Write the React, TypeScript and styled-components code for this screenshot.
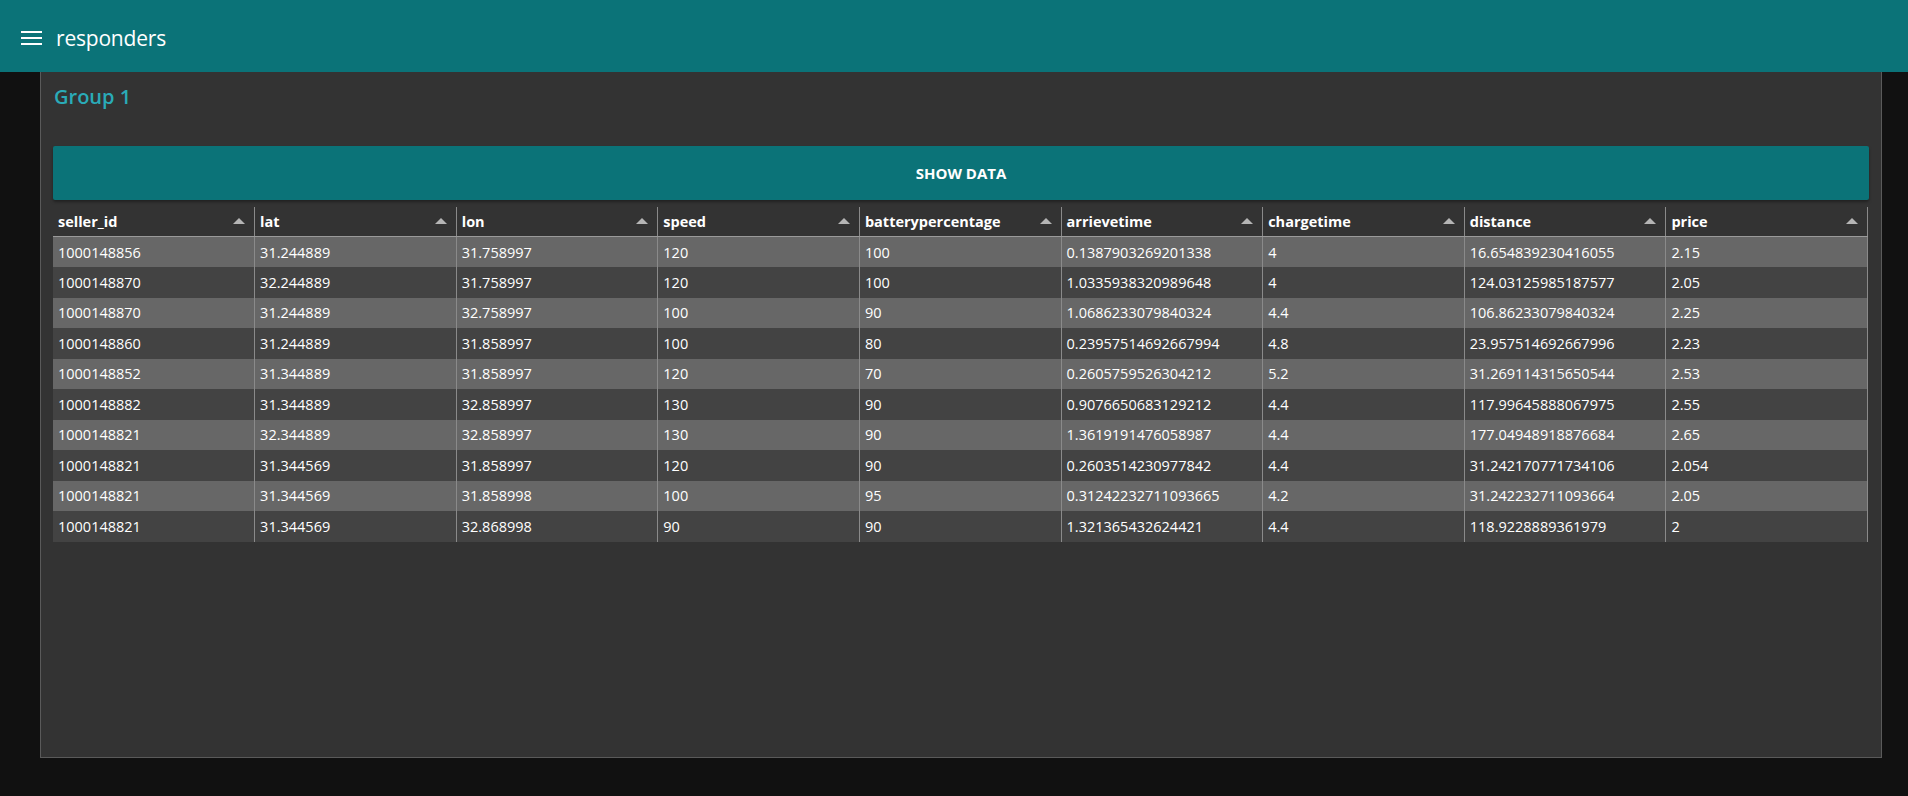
import styled, { createGlobalStyle } from 'styled-components';

const GlobalStyle = createGlobalStyle`
  body {
    margin: 0;
    background: #111111;
    font-family: "Open Sans", "Noto Sans", sans-serif;
  }
`;

const columns = [
  'seller_id',
  'lat',
  'lon',
  'speed',
  'batterypercentage',
  'arrievetime',
  'chargetime',
  'distance',
  'price',
];

const rows: string[][] = [
  ['1000148856', '31.244889', '31.758997', '120', '100', '0.1387903269201338', '4', '16.654839230416055', '2.15'],
  ['1000148870', '32.244889', '31.758997', '120', '100', '1.0335938320989648', '4', '124.03125985187577', '2.05'],
  ['1000148870', '31.244889', '32.758997', '100', '90', '1.0686233079840324', '4.4', '106.86233079840324', '2.25'],
  ['1000148860', '31.244889', '31.858997', '100', '80', '0.23957514692667994', '4.8', '23.957514692667996', '2.23'],
  ['1000148852', '31.344889', '31.858997', '120', '70', '0.2605759526304212', '5.2', '31.269114315650544', '2.53'],
  ['1000148882', '31.344889', '32.858997', '130', '90', '0.9076650683129212', '4.4', '117.99645888067975', '2.55'],
  ['1000148821', '32.344889', '32.858997', '130', '90', '1.3619191476058987', '4.4', '177.04948918876684', '2.65'],
  ['1000148821', '31.344569', '31.858997', '120', '90', '0.2603514230977842', '4.4', '31.242170771734106', '2.054'],
  ['1000148821', '31.344569', '31.858998', '100', '95', '0.31242232711093665', '4.2', '31.242232711093664', '2.05'],
  ['1000148821', '31.344569', '32.868998', '90', '90', '1.321365432624421', '4.4', '118.9228889361979', '2'],
];

const TopBar = styled.header`
  height: 72px;
  background: #0b7378;
  display: flex;
  align-items: center;
  gap: 14px;
  padding-left: 21px;
  color: #ffffff;
`;

const MenuButton = styled.button`
  width: 21px;
  height: 14px;
  margin-top: 3px;
  padding: 0;
  border: none;
  background: none;
  display: flex;
  flex-direction: column;
  justify-content: space-between;
  cursor: pointer;
  span {
    display: block;
    height: 2px;
    background: #ffffff;
  }
`;

const AppTitle = styled.h1`
  margin: 3px 0 0;
  font-size: 21px;
  font-weight: 400;
  letter-spacing: -0.2px;
`;

const Main = styled.main`
  padding: 0 26px 37px 40px;
`;

const Panel = styled.section`
  height: 686px;
  background: #333333;
  border: 1px solid #5a5a5a;
  border-top: none;
  padding: 13px 12px 0;
  box-sizing: border-box;
`;

const GroupTitle = styled.h2`
  margin: 0 0 37px 1px;
  font-size: 20px;
  line-height: 24px;
  font-weight: 600;
  color: #2aabb8;
`;

const DataButton = styled.button`
  display: block;
  width: 100%;
  height: 54px;
  border: none;
  border-radius: 2px;
  background: #0b7378;
  color: #ffffff;
  font-family: inherit;
  font-size: 15px;
  font-weight: 700;
  box-shadow: 0 2px 3px rgba(0, 0, 0, 0.35);
  cursor: pointer;
`;

const Table = styled.table`
  margin-top: 7px;
  width: calc(100% - 1px);
  table-layout: fixed;
  border-collapse: collapse;
  color: #ffffff;
  font-size: 14.5px;
`;

const HeadCell = styled.th`
  height: 29px;
  padding: 0 5px;
  text-align: left;
  font-weight: 700;
  border-right: 1px solid #8a8a8a;
  border-bottom: 1px solid #9a9a9a;
  position: relative;
`;

const SortArrow = styled.span`
  position: absolute;
  right: 9px;
  top: 11px;
  width: 0;
  height: 0;
  border-left: 6px solid transparent;
  border-right: 6px solid transparent;
  border-bottom: 6px solid #b5b5b5;
`;

const Row = styled.tr<{ $odd: boolean }>`
  height: 30.5px;
  background: ${(p) => (p.$odd ? '#676767' : '#434343')};
`;

const Cell = styled.td`
  padding: 0 5px;
  border-right: 1px solid #8a8a8a;
  white-space: nowrap;
  overflow: hidden;
`;

export default function App() {
  return (
    <>
      <GlobalStyle />
      <TopBar>
        <MenuButton aria-label="menu">
          <span />
          <span />
          <span />
        </MenuButton>
        <AppTitle>responders</AppTitle>
      </TopBar>
      <Main>
        <Panel>
          <GroupTitle>Group 1</GroupTitle>
          <DataButton>SHOW DATA</DataButton>
          <Table>
            <thead>
              <tr>
                {columns.map((c) => (
                  <HeadCell key={c}>
                    {c}
                    <SortArrow />
                  </HeadCell>
                ))}
              </tr>
            </thead>
            <tbody>
              {rows.map((r, i) => (
                <Row key={i} $odd={i % 2 === 0}>
                  {r.map((v, j) => (
                    <Cell key={j}>{v}</Cell>
                  ))}
                </Row>
              ))}
            </tbody>
          </Table>
        </Panel>
      </Main>
    </>
  );
}
